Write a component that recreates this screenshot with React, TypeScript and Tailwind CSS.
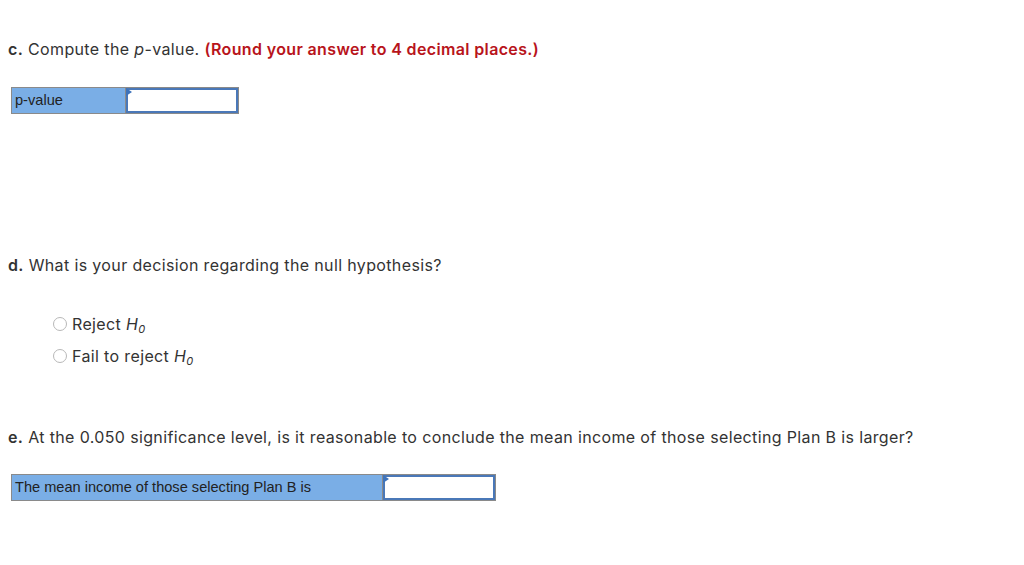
import React from 'react'

const body = { fontFamily: 'Inter, "Open Sans", sans-serif' }
const arial = { fontFamily: '"Liberation Sans", Arial, sans-serif' }

function AnswerRow({ label, labelW, inputW }: { label: string; labelW: string; inputW: string }) {
  return (
    <div className="flex w-fit border border-[#8a8a8a] tracking-normal" style={arial}>
      <div className={`${labelW} h-[25px] bg-[#7aaee6] px-[3px] text-[14.6px] leading-[25px] text-[#222]`}>{label}</div>
      <div className={`${inputW} relative h-[25px] border-l border-[#8a8a8a] bg-white`}>
        <div className="h-full border-2 border-[#4a78b8]" />
        <div className="absolute left-0 top-0 h-0 w-0 border-y-[4px] border-l-[6px] border-y-transparent border-l-[#3e73bb]" />
      </div>
    </div>
  )
}

function Radio({ children }: { children: React.ReactNode }) {
  return (
    <label className="flex items-center gap-[5px]">
      <span className="inline-block h-[14px] w-[14px] rounded-full border border-[#b8b8b8] bg-white" />
      <span>{children}</span>
    </label>
  )
}

export default function App() {
  return (
    <div className="min-h-[565px] w-[1024px] bg-white text-[16px] tracking-[0.36px] text-[#333]" style={body}>
      <div className="px-2 pt-[37px]">
        <p className="leading-6">
          <b className="font-semibold">c.</b> Compute the <i>p</i>-value.{' '}
          <b className="font-semibold text-[#b8141b]">(Round your answer to 4 decimal places.)</b>
        </p>
        <div className="mt-[26px] pl-[3px]">
          <AnswerRow label="p-value" labelW="w-[113px]" inputW="w-[113px]" />
        </div>

        <p className="mt-[139px] leading-6">
          <b className="font-semibold">d.</b> What is your decision regarding the null hypothesis?
        </p>
        <div className="mt-[35px] flex flex-col gap-[8px] pl-[45px]">
          <Radio>Reject <i>H<sub className="text-[11px]">0</sub></i></Radio>
          <Radio>Fail to reject <i>H<sub className="text-[11px]">0</sub></i></Radio>
        </div>

        <p className="mt-[57px] leading-6">
          <b className="font-semibold">e.</b> At the 0.050 significance level, is it reasonable to conclude the mean income of those selecting Plan B is larger?
        </p>
        <div className="mt-[25px] pl-[3px]">
          <AnswerRow label="The mean income of those selecting Plan B is" labelW="w-[370px]" inputW="w-[113px]" />
        </div>
      </div>
    </div>
  )
}
